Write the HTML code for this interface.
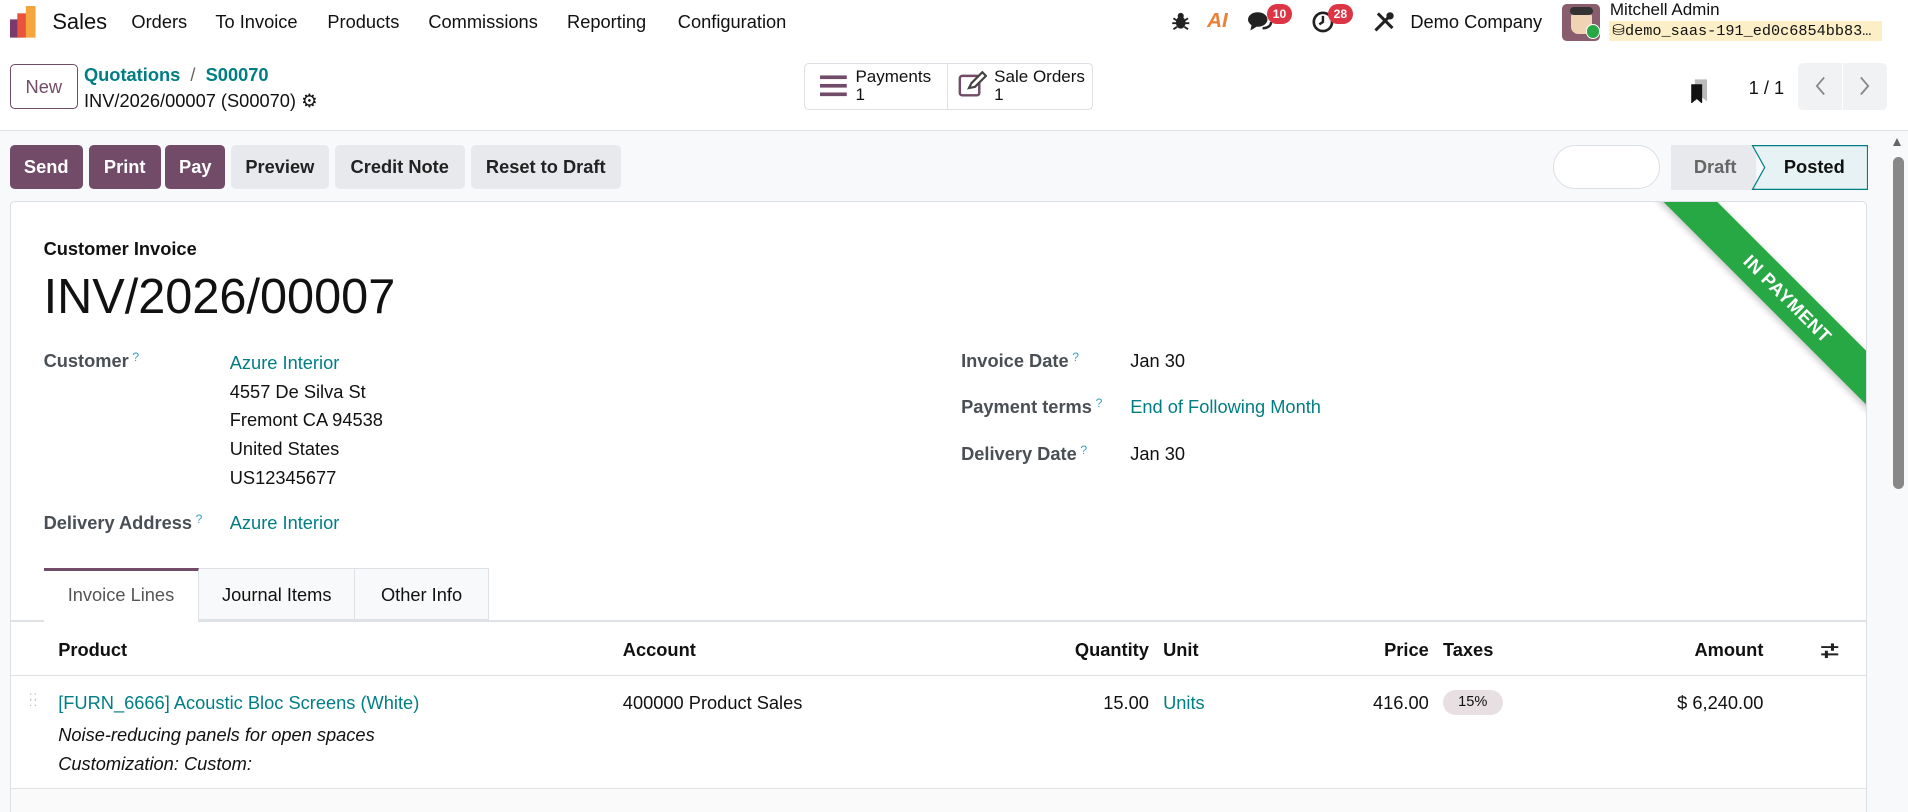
<!DOCTYPE html>
<html><head><meta charset="utf-8"><style>
*{box-sizing:border-box;margin:0;padding:0}
html,body{width:1908px;height:812px;overflow:hidden;background:#fff}
#w{zoom:1.21684;width:1568px;height:667px;position:relative;font-family:"Liberation Sans",sans-serif;font-size:15px;color:#111;overflow:hidden;background:#f8f9fa}
.a{position:absolute;white-space:nowrap}
.nav{position:absolute;left:0;top:0;width:1568px;height:36px;background:#fff}
.cp{position:absolute;left:0;top:36px;width:1568px;height:72px;background:#fff;border-bottom:1px solid #dee2e6}
.btn{position:absolute;top:119px;height:36px;border-radius:4px;font-weight:bold;font-size:15px;display:flex;align-items:center;justify-content:center}
.p{background:#714b67;color:#fff}.s{background:#e7e9ed;color:#222}
.teal{color:#017e84}
.lbl{color:#4a4f55;font-weight:bold}
.q{color:#3aa0c8;font-size:10px;vertical-align:top;margin-left:3px;font-weight:normal}
.sheet{position:absolute;left:8px;top:165px;width:1526px;height:520px;background:#fff;border:1px solid #dcdfe3;border-radius:4px;overflow:hidden}
.badge{position:absolute;background:#dc3545;color:#fff;font-size:10px;font-weight:bold;border-radius:9px;height:17px;padding:0 5px;line-height:17px}
</style></head><body><div id="w">
<div class="nav">
 <svg class="a" style="left:8px;top:5px" width="23" height="26" viewBox="0 0 23 26"><rect x="0" y="11" width="8" height="15" fill="#7a3a6c"/><rect x="6" y="6" width="8" height="20" fill="#e9523b"/><rect x="13" y="0" width="8" height="26" fill="#f4a53b"/></svg>
 <div class="a" style="left:43px;top:7px;font-size:18px">Sales</div>
 <div class="a" style="left:108px;top:9px">Orders</div>
 <div class="a" style="left:177px;top:9px">To Invoice</div>
 <div class="a" style="left:269px;top:9px">Products</div>
 <div class="a" style="left:352px;top:9px">Commissions</div>
 <div class="a" style="left:466px;top:9px">Reporting</div>
 <div class="a" style="left:557px;top:9px">Configuration</div>
 <svg class="a" style="left:962px;top:9px" width="16" height="16" viewBox="0 0 16 16"><ellipse cx="8" cy="9.5" rx="4" ry="5" fill="#222"/><circle cx="8" cy="4" r="2.5" fill="#222"/><path d="M2 6l3 2M14 6l-3 2M1 10h4M15 10h-4M2 15l3-2M14 15l-3-2" stroke="#222" stroke-width="1.5"/></svg>
 <div class="a" style="left:992px;top:7px;font-weight:bold;font-size:17px;color:#e9813b;font-style:italic">AI</div>
 <svg class="a" style="left:1026px;top:9px" width="20" height="18" viewBox="0 0 20 18"><ellipse cx="8" cy="7" rx="8" ry="6" fill="#222"/><path d="M3 11l-1 5 5-3z" fill="#222"/><path d="M12 14a6 5 0 0 0 7-5" stroke="#222" stroke-width="2" fill="none"/></svg>
 <div class="badge" style="left:1041px;top:3px">10</div>
 <svg class="a" style="left:1078px;top:9px" width="18" height="18" viewBox="0 0 18 18"><circle cx="9" cy="9" r="7.5" fill="none" stroke="#222" stroke-width="2.2"/><path d="M9 4v5l-3 2" stroke="#222" stroke-width="2" fill="none"/></svg>
 <div class="badge" style="left:1091px;top:3px">28</div>
 <svg class="a" style="left:1128px;top:9px" width="18" height="18" viewBox="0 0 18 18"><path d="M2 16L13 5M4 2l12 12" stroke="#222" stroke-width="2.5"/><circle cx="14" cy="4" r="3" fill="#222"/></svg>
 <div class="a" style="left:1159px;top:9px">Demo Company</div>
 <div class="a" style="left:1284px;top:3px;width:31px;height:31px;border-radius:4px;background:#8a5d6e"><div style="position:absolute;left:7px;top:5px;width:17px;height:20px;background:#f1d3b3;border-radius:6px"></div><div style="position:absolute;left:6px;top:3px;width:19px;height:6px;background:#333;border-radius:4px"></div></div>
 <div class="a" style="left:1303px;top:20px;width:12px;height:12px;border-radius:6px;background:#28a745;border:1.5px solid #fff"></div>
 <div class="a" style="left:1323px;top:0px;font-size:14px">Mitchell Admin</div>
 <div class="a" style="left:1322px;top:17px;width:225px;height:17px;background:#fcefc7;font-family:'Liberation Mono',monospace;font-size:12.5px;line-height:17px;padding-left:3px">&#9921;demo_saas-191_ed0c6854bb83…</div>
</div>
<div class="cp">
 <div class="a" style="left:8px;top:17px;width:56px;height:37px;border:1px solid #714b67;border-radius:4px;color:#714b67;display:flex;align-items:center;justify-content:center">New</div>
 <div class="a teal" style="left:69px;top:17px;font-weight:bold">Quotations <span style="color:#666;font-weight:normal">&nbsp;/&nbsp;</span> S00070</div>
 <div class="a" style="left:69px;top:38px">INV/2026/00007 (S00070) <span style="font-size:15px">&#9881;</span></div>
 <div class="a" style="left:661px;top:16px;width:237px;height:38px;border:1px solid #dcdfe3;border-radius:4px"></div>
 <div class="a" style="left:778px;top:16px;width:1px;height:38px;background:#dcdfe3"></div>
 <svg class="a" style="left:674px;top:24px" width="22" height="20"><rect y="2" width="22" height="3" fill="#714b67"/><rect y="9" width="22" height="3" fill="#714b67"/><rect y="16" width="22" height="3" fill="#714b67"/></svg>
 <div class="a" style="left:703px;top:20px;font-size:14px;line-height:15px">Payments<br>1</div>
 <svg class="a" style="left:787px;top:22px" width="24" height="22" viewBox="0 0 24 22"><rect x="1.5" y="4" width="16" height="16" rx="2" fill="none" stroke="#714b67" stroke-width="2"/><path d="M9 14l2-4 9-9 3 3-9 9z" fill="#fff" stroke="#444" stroke-width="1.8"/></svg>
 <div class="a" style="left:817px;top:20px;font-size:14px;line-height:15px">Sale Orders<br>1</div>
 <svg class="a" style="left:1389px;top:27px" width="18" height="22"><path d="M4 2h10v18l-5-4-5 4z" fill="#bbb"/><path d="M1 6h9v16l-4.5-4L1 22z" fill="#111"/></svg>
 <div class="a" style="left:1437px;top:27px">1 / 1</div>
 <div class="a" style="left:1478px;top:16px;width:73px;height:38px;background:#f1f2f4;border-radius:4px"></div>
 <div class="a" style="left:1514px;top:16px;width:1px;height:38px;background:#fff"></div>
 <svg class="a" style="left:1489px;top:26px" width="14" height="18"><path d="M10 2L4 9l6 7" stroke="#888" stroke-width="1.5" fill="none"/></svg>
 <svg class="a" style="left:1525px;top:26px" width="14" height="18"><path d="M4 2l6 7-6 7" stroke="#888" stroke-width="1.5" fill="none"/></svg>
</div>
<div class="btn p" style="left:8px;width:60px">Send</div>
<div class="btn p" style="left:73px;width:59px">Print</div>
<div class="btn p" style="left:136px;width:49px">Pay</div>
<div class="btn s" style="left:190px;width:80px">Preview</div>
<div class="btn s" style="left:275px;width:107px">Credit Note</div>
<div class="btn s" style="left:387px;width:123px">Reset to Draft</div>
<div class="a" style="left:1276px;top:119px;width:88px;height:36px;border:1px solid #dcdfe3;border-radius:18px;background:#fff"></div>
<svg class="a" style="left:1373px;top:119px" width="162" height="37"><rect x="0" y="0" width="70" height="37" fill="#e7e9ed"/><path d="M67 0.5H161.5V36.5H67L77 18.5Z" fill="#e6f2f3" stroke="#017e84" stroke-width="1"/></svg>
<div class="a" style="left:1392px;top:128px;color:#666;font-weight:bold">Draft</div>
<div class="a" style="left:1466px;top:128px;font-weight:bold">Posted</div>
<div class="a" style="left:1553px;top:110px;width:15px;height:557px;background:#f8f9fa"></div>
<div class="a" style="left:1556px;top:113px;width:0;height:0;border-left:4px solid transparent;border-right:4px solid transparent;border-bottom:7px solid #666"></div>
<div class="a" style="left:1556px;top:129px;width:9px;height:273px;background:#888;border-radius:5px"></div>
<div class="sheet">
 <div class="a" style="left:1310px;top:64px;width:300px;height:31px;background:#28a745;transform:rotate(45deg);transform-origin:center;color:#fff;font-weight:bold;font-size:15px;text-align:center;line-height:31px;box-shadow:0 2px 6px rgba(0,0,0,.25);letter-spacing:.5px">IN PAYMENT</div>
 <div class="a" style="left:27px;top:30px;font-weight:bold">Customer Invoice</div>
 <div class="a" style="left:27px;top:55px;font-size:40px;font-weight:500">INV/2026/00007</div>
 <div class="a lbl" style="left:27px;top:122px">Customer<span class="q">?</span></div>
 <div class="a" style="left:180px;top:121px;line-height:23.6px"><span class="teal">Azure Interior</span><br>4557 De Silva St<br>Fremont CA 94538<br>United States<br>US12345677</div>
 <div class="a lbl" style="left:27px;top:255px">Delivery Address<span class="q">?</span></div>
 <div class="a teal" style="left:180px;top:255px">Azure Interior</div>
 <div class="a lbl" style="left:781px;top:122px">Invoice Date<span class="q">?</span></div>
 <div class="a" style="left:920px;top:122px">Jan 30</div>
 <div class="a lbl" style="left:781px;top:160px">Payment terms<span class="q">?</span></div>
 <div class="a teal" style="left:920px;top:160px">End of Following Month</div>
 <div class="a lbl" style="left:781px;top:198px">Delivery Date<span class="q">?</span></div>
 <div class="a" style="left:920px;top:198px">Jan 30</div>
 <div class="a" style="left:0;top:344px;width:1526px;height:1px;background:#dee2e6"></div>
 <div class="a" style="left:27px;top:301px;width:128px;height:44px;background:#fff;border-top:3px solid #714b67;border-right:1px solid #dee2e6;color:#555;text-align:center;line-height:40px">Invoice Lines</div>
 <div class="a" style="left:155px;top:301px;width:128px;height:43px;background:#f8f9fa;border:1px solid #dee2e6;border-left:none;text-align:center;line-height:42px">Journal Items</div>
 <div class="a" style="left:283px;top:301px;width:110px;height:43px;background:#f8f9fa;border:1px solid #dee2e6;border-left:none;text-align:center;line-height:42px">Other Info</div>
 <div class="a" style="left:39px;top:359px;font-weight:bold">Product</div>
 <div class="a" style="left:503px;top:359px;font-weight:bold">Account</div>
 <div class="a" style="right:589px;top:359px;font-weight:bold">Quantity</div>
 <div class="a" style="left:947px;top:359px;font-weight:bold">Unit</div>
 <div class="a" style="right:359px;top:359px;font-weight:bold">Price</div>
 <div class="a" style="left:1177px;top:359px;font-weight:bold">Taxes</div>
 <div class="a" style="right:84px;top:359px;font-weight:bold">Amount</div>
 <svg class="a" style="left:1487px;top:361px" width="16" height="16"><path d="M1 5h14M1 11h14" stroke="#222" stroke-width="1.6"/><rect x="9" y="2" width="2.5" height="6" fill="#222"/><rect x="4" y="8" width="2.5" height="6" fill="#222"/></svg>
 <div class="a" style="left:0;top:389px;width:1526px;height:1px;background:#dee2e6"></div>
 <div class="a" style="left:15px;top:404px;color:#bbb;font-size:10px;line-height:5px;letter-spacing:1px">::<br>::</div>
 <div class="a teal" style="left:39px;top:403px">[FURN_6666] Acoustic Bloc Screens (White)</div>
 <div class="a" style="left:39px;top:426px;font-style:italic;line-height:24px">Noise-reducing panels for open spaces<br>Customization: Custom:</div>
 <div class="a" style="left:503px;top:403px">400000 Product Sales</div>
 <div class="a" style="right:589px;top:403px">15.00</div>
 <div class="a teal" style="left:947px;top:403px">Units</div>
 <div class="a" style="right:359px;top:403px">416.00</div>
 <div class="a" style="left:1177px;top:401px;width:49px;height:21px;border-radius:11px;background:#e7dfe2;font-size:12px;text-align:center;line-height:21px">15%</div>
 <div class="a" style="right:84px;top:403px">$ 6,240.00</div>
 <div class="a" style="left:0;top:482px;width:1526px;height:1px;background:#dee2e6"></div>
 <div class="a" style="left:0;top:483px;width:1526px;height:40px;background:#fafafa"></div>
</div>
</div></body></html>
